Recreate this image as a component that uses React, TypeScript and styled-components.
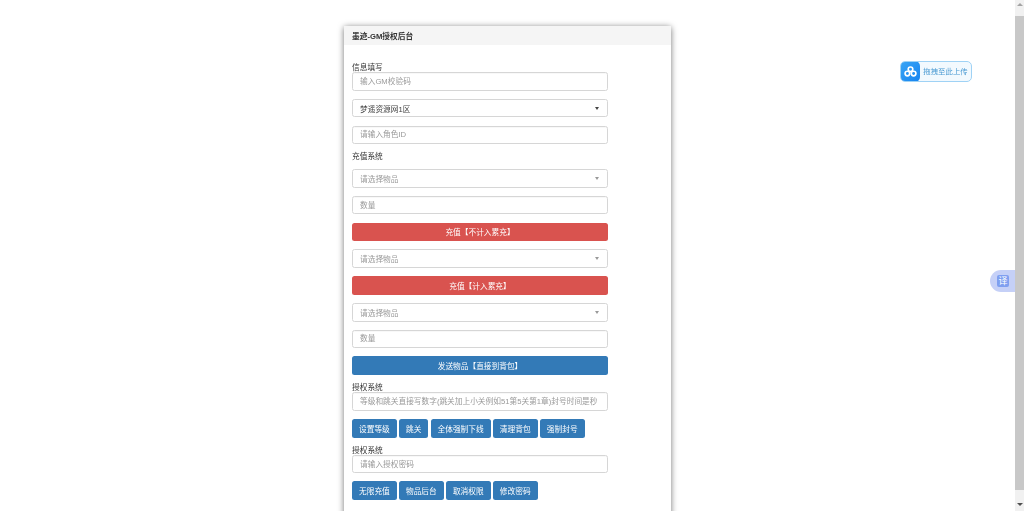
import React from "react";
import styled, { createGlobalStyle } from "styled-components";

const Global = createGlobalStyle`
  html, body {
    margin: 0;
    padding: 0;
    height: 511px;
    overflow: hidden;
    background: #fff;
    font-family: "Liberation Sans", "Noto Sans CJK SC", sans-serif;
  }
  * { box-sizing: border-box; }
`;

const App = () => {
  return (
    <>
      <Global />
      <Shell>
        <Main>
          <Card>
            <CardHead>墨迹-GM授权后台</CardHead>
            <CardBody>
              <Form>
                <TightLabel>信息填写</TightLabel>
                <Input placeholder="输入GM校验码" />
                <Select>
                  <span>梦遥资源网1区</span>
                  <Caret />
                </Select>
                <Input placeholder="请输入角色ID" />
                <Label>充值系统</Label>
                <Select $empty>
                  <span>请选择物品</span>
                  <Caret $light />
                </Select>
                <Input placeholder="数量" />
                <WideButton $bg="#d9534f">充值【不计入累充】</WideButton>
                <Select $empty>
                  <span>请选择物品</span>
                  <Caret $light />
                </Select>
                <WideButton $bg="#d9534f">充值【计入累充】</WideButton>
                <Select $empty>
                  <span>请选择物品</span>
                  <Caret $light />
                </Select>
                <Input placeholder="数量" />
                <WideButton $bg="#337ab7">发送物品【直接到背包】</WideButton>
                <TightLabel>授权系统</TightLabel>
                <Input placeholder="等级和跳关直接写数字(跳关加上小关例如51第5关第1章)封号时间是秒" />
                <ButtonRow>
                  <SmallButton>设置等级</SmallButton>
                  <SmallButton>跳关</SmallButton>
                  <SmallButton>全体强制下线</SmallButton>
                  <SmallButton>清理背包</SmallButton>
                  <SmallButton>强制封号</SmallButton>
                </ButtonRow>
                <TightLabel $up>授权系统</TightLabel>
                <Input placeholder="请输入授权密码" />
                <ButtonRow>
                  <SmallButton>无限充值</SmallButton>
                  <SmallButton>物品后台</SmallButton>
                  <SmallButton>取消权限</SmallButton>
                  <SmallButton>修改密码</SmallButton>
                </ButtonRow>
              </Form>
            </CardBody>
          </Card>
          <UploadWidget>
            <UploadIcon>
              <svg width="13" height="11" viewBox="0 0 14 12" fill="none" stroke="#fff" strokeWidth="1.8">
                <circle cx="7" cy="3.6" r="2.5" />
                <circle cx="3.6" cy="8.2" r="2.5" />
                <circle cx="10.4" cy="8.2" r="2.5" />
              </svg>
            </UploadIcon>
            <UploadText>拖拽至此上传</UploadText>
          </UploadWidget>
          <TranslateTab>
            <TranslateIcon>译</TranslateIcon>
          </TranslateTab>
        </Main>
        <ScrollBar>
          <ScrollArrow />
          <ScrollThumb />
          <ScrollArrow $down />
        </ScrollBar>
      </Shell>
    </>
  );
};

export default App;

const Shell = styled.div`
  position: relative;
  display: flex;
  width: 1024px;
  height: 511px;
  overflow: hidden;
  filter: blur(0.45px);
`;

const Main = styled.div`
  flex: 1;
  display: flex;
  justify-content: center;
  align-items: flex-start;
  padding-top: 26px;
  height: 511px;
  overflow: hidden;
`;

const Card = styled.div`
  width: 327px;
  min-height: 520px;
  flex-shrink: 0;
  background: #fff;
  border-radius: 2px;
  box-shadow: 0 1px 6px rgba(0, 0, 0, 0.55);
`;

const CardHead = styled.div`
  height: 19px;
  padding-left: 8px;
  display: flex;
  align-items: center;
  background: #f5f5f5;
  color: #333;
  font-size: 7.7px;
  font-weight: 700;
`;

const CardBody = styled.div`
  padding: 18px 8px 0;
`;

const Form = styled.div`
  width: 256px;
`;

const Label = styled.div`
  height: 9px;
  line-height: 9px;
  margin-bottom: 7.6px;
  color: #333;
  font-size: 7.7px;
`;

const TightLabel = styled.div<{ $up?: boolean }>`
  height: 9px;
  line-height: ${({ $up }) => ($up ? 9 : 10)}px;
  color: #333;
  font-size: 7.7px;
`;

const Input = styled.input`
  display: block;
  width: 100%;
  height: 18.7px;
  margin: 0 0 8.1px;
  padding: 0 7px;
  border: 1px solid #d6d6d6;
  border-radius: 2.5px;
  outline: none;
  background: #fff;
  color: #555;
  font-family: inherit;
  font-size: 7.7px;
  box-shadow: inset 0 1px 1px rgba(0, 0, 0, 0.03);

  &::placeholder {
    color: #999;
    opacity: 1;
  }
`;

const Select = styled.div<{ $empty?: boolean }>`
  display: flex;
  align-items: center;
  justify-content: space-between;
  width: 100%;
  height: 18.7px;
  margin-bottom: 8.1px;
  padding: 0 8px 0 7px;
  border: 1px solid #d6d6d6;
  border-radius: 2.5px;
  background: #fff;
  color: ${({ $empty }) => ($empty ? "#999" : "#444")};
  font-size: 7.7px;
`;

const Caret = styled.i<{ $light?: boolean }>`
  width: 0;
  height: 0;
  border-left: 2.5px solid transparent;
  border-right: 2.5px solid transparent;
  border-top: 3px solid ${({ $light }) => ($light ? "#999" : "#444")};
`;

const WideButton = styled.button<{ $bg: string }>`
  display: block;
  width: 100%;
  height: 18.7px;
  margin: 0 0 8.1px;
  padding: 0;
  border: none;
  border-radius: 2.5px;
  background: ${({ $bg }) => $bg};
  color: #fff;
  font-family: inherit;
  font-size: 7.7px;
`;

const ButtonRow = styled.div`
  display: flex;
  gap: 2.2px;
  margin-bottom: 8px;
`;

const SmallButton = styled.button`
  height: 18.7px;
  padding: 0 7px;
  border: none;
  border-radius: 2.5px;
  background: #337ab7;
  color: #fff;
  font-family: inherit;
  font-size: 7.7px;
  white-space: nowrap;
`;

const UploadWidget = styled.div`
  position: absolute;
  left: 900px;
  top: 61px;
  display: flex;
  width: 72px;
  height: 21px;
  border: 1px solid #9fd2f5;
  border-radius: 5px;
  background: #f2f9fe;
  overflow: hidden;
`;

const UploadIcon = styled.div`
  width: 20px;
  margin: -1px 0 -1px -1px;
  display: flex;
  align-items: center;
  justify-content: center;
  background: linear-gradient(135deg, #3ba6f5, #1583f0);
  border-radius: 5px;
`;

const UploadText = styled.div`
  flex: 1;
  text-align: center;
  line-height: 19px;
  color: #4a9ad2;
  font-size: 7.4px;
`;

const TranslateTab = styled.div`
  position: absolute;
  left: 990px;
  top: 270px;
  width: 25px;
  height: 22px;
  display: flex;
  align-items: center;
  padding-left: 7px;
  border-radius: 11px 0 0 11px;
  background: #c5d0f7;
`;

const TranslateIcon = styled.div`
  width: 12px;
  height: 12px;
  border-radius: 2px;
  background: #7f9ff0;
  color: #fff;
  font-size: 9px;
  line-height: 12px;
  text-align: center;
`;

const ScrollBar = styled.div`
  width: 9px;
  flex-shrink: 0;
  display: flex;
  flex-direction: column;
  align-items: center;
  padding: 3px 0 5px;
  background: #f1f1f1;
`;

const ScrollArrow = styled.i<{ $down?: boolean }>`
  flex-shrink: 0;
  width: 0;
  height: 0;
  border-left: 3px solid transparent;
  border-right: 3px solid transparent;
  ${({ $down }) =>
    $down ? "border-top: 3px solid #505050;" : "border-bottom: 3px solid #a3a3a3;"}
`;

const ScrollThumb = styled.div`
  flex: 1;
  width: 100%;
  margin: 10px 0 13px;
  background: #c8c8c8;
`;
